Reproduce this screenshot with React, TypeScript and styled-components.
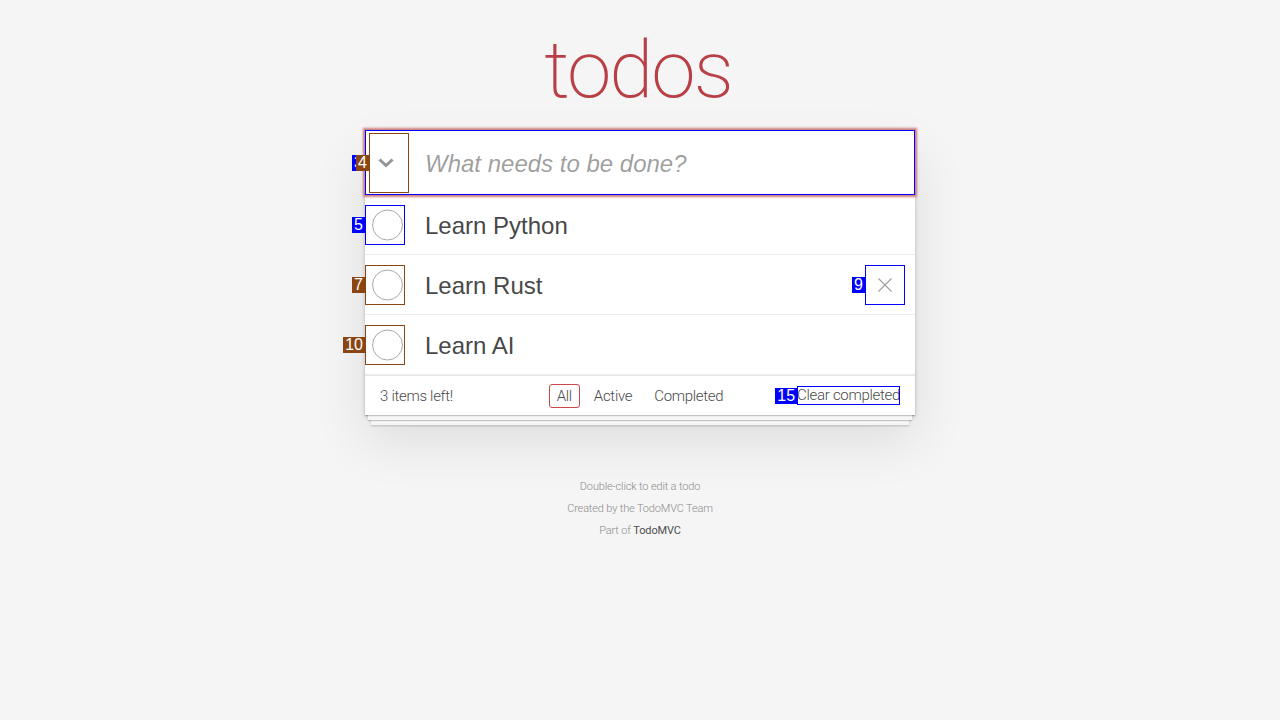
import React from 'react';
import styled, { createGlobalStyle } from 'styled-components';

const Global = createGlobalStyle`
  html, body { margin: 0; padding: 0; }
  body {
    background: #f5f5f5;
    font-family: 'Liberation Sans', Arial, sans-serif;
    color: #111;
    -webkit-font-smoothing: antialiased;
  }
  * { box-sizing: border-box; }
`;

const Page = styled.div`
  width: 550px;
  margin: 0 auto;
`;

const Title = styled.h1`
  margin: 0;
  height: 130px;
  padding-top: 30px;
  padding-right: 4px;
  font-family: Roboto, 'Liberation Sans', sans-serif;
  font-weight: 200;
  font-size: 80px;
  line-height: 80px;
  letter-spacing: -2px;
  text-align: center;
  color: #b83f45;
`;

const TodoApp = styled.section`
  position: relative;
  background: #fff;
  box-shadow: 0 2px 4px 0 rgba(0, 0, 0, 0.2), 0 25px 50px 0 rgba(0, 0, 0, 0.1);
`;

const NewRow = styled.div`
  position: relative;
  z-index: 2;
  display: flex;
  align-items: center;
  height: 65px;
  background: #fff;
  box-shadow: 0 0 2px 2px #cf7d7d, inset 0 -2px 1px rgba(0, 0, 0, 0.03);
`;

const ToggleAll = styled.div`
  position: relative;
  flex: none;
  width: 45px;
  height: 65px;
  display: flex;
  align-items: center;
  justify-content: center;
  padding: 1px 3px 0 0;
`;

const NewInput = styled.input`
  flex: 1;
  height: 100%;
  border: none;
  outline: none;
  background: transparent;
  padding: 2px 15px 0;
  font-family: 'Liberation Sans', Arial, sans-serif;
  font-size: 24px;
  color: #484848;
  &::placeholder {
    font-style: italic;
    color: rgba(0, 0, 0, 0.4);
  }
`;

const List = styled.ul`
  list-style: none;
  margin: 0;
  padding: 0;
`;

const Item = styled.li`
  display: flex;
  align-items: center;
  height: 60px;
  border-bottom: 1px solid #ededed;
`;

const ToggleBox = styled.span`
  position: relative;
  flex: none;
  width: 40px;
  height: 40px;
  margin-top: 1px;
`;

const Label = styled.label`
  flex: 1;
  padding: 4px 0 0 20px;
  font-family: 'Liberation Sans', Arial, sans-serif;
  font-size: 24px;
  line-height: 1.2;
  color: #484848;
`;

const Destroy = styled.button`
  position: relative;
  flex: none;
  width: 40px;
  height: 40px;
  margin: 1px 10px 0 auto;
  padding: 0;
  border: none;
  background: none;
  display: flex;
  align-items: center;
  justify-content: center;
`;

const Footer = styled.footer`
  position: relative;
  display: grid;
  grid-template-columns: 1fr auto 1fr;
  align-items: center;
  height: 40px;
  padding: 0 15px;
  border-top: 1px solid #e6e6e6;
  font-family: Roboto, 'Liberation Sans', sans-serif;
  font-weight: 300;
  font-size: 15px;
  letter-spacing: -0.3px;
  color: #4a4a4a;
  &::before {
    content: '';
    position: absolute;
    right: 0;
    bottom: 0;
    left: 0;
    height: 50px;
    overflow: hidden;
    pointer-events: none;
    box-shadow: 0 1px 1px rgba(0, 0, 0, 0.2), 0 8px 0 -3px #f6f6f6,
      0 9px 1px -3px rgba(0, 0, 0, 0.2), 0 16px 0 -6px #f6f6f6,
      0 17px 2px -6px rgba(0, 0, 0, 0.2);
  }
`;

const Count = styled.span`
  justify-self: start;
`;

const Filters = styled.ul`
  display: flex;
  list-style: none;
  margin: 0;
  padding: 0;
`;

const FilterLink = styled.a<{ $selected?: boolean }>`
  display: block;
  margin: 0 3px;
  padding: 2px 7px 1px;
  line-height: 19px;
  border: 1px solid ${(p) => (p.$selected ? '#ce4646' : 'transparent')};
  border-radius: 3px;
  color: inherit;
  text-decoration: none;
`;

const Clear = styled.button`
  position: relative;
  justify-self: end;
  border: none;
  background: none;
  padding: 0;
  font: inherit;
  letter-spacing: inherit;
  color: inherit;
  line-height: 19px;
`;

const Info = styled.footer`
  margin-top: 66px;
  text-align: center;
  font-family: Roboto, 'Liberation Sans', sans-serif;
  font-weight: 300;
  font-size: 11px;
  letter-spacing: -0.15px;
  color: #8a8a8a;
  text-shadow: 0 1px 0 rgba(255, 255, 255, 0.5);
  p {
    margin: 11px 0;
    line-height: 1;
  }
  a {
    color: #4d4d4d;
    font-weight: 400;
    text-decoration: none;
  }
`;

const Mark = styled.div<{ $c: string }>`
  position: absolute;
  inset: 0;
  border: 1px solid ${(p) => p.$c};
  pointer-events: none;
`;

const Tag = styled.span<{ $c: string }>`
  position: absolute;
  right: calc(100% + 1px);
  top: 50%;
  transform: translateY(-50%);
  background: ${(p) => p.$c};
  color: #fff;
  font-family: 'Liberation Sans', Arial, sans-serif;
  font-size: 16px;
  line-height: 16px;
  font-weight: 400;
  letter-spacing: 0;
  padding: 0 2px;
  white-space: nowrap;
`;

const AllMark = styled(Mark)`
  inset: auto;
  left: 4px;
  top: 3px;
  width: 40px;
  height: 60px;
`;

const BLUE = '#0000ff';
const BROWN = '#8b4513';

const Annot: React.FC<{ n: string; c: string }> = ({ n, c }) => (
  <Mark $c={c}>
    <Tag $c={c}>{n}</Tag>
  </Mark>
);

const Circle = () => (
  <svg width="40" height="40" viewBox="0 0 40 40">
    <circle cx="22.5" cy="20" r="15" fill="none" stroke="#a8a8a8" strokeWidth="1" />
  </svg>
);

const Chevron = () => (
  <svg width="18" height="12" viewBox="0 0 18 12">
    <polyline points="2.5,2.5 9,8.5 15.5,2.5" fill="none" stroke="#949494" strokeWidth="3" />
  </svg>
);

const Cross = () => (
  <svg width="16" height="16" viewBox="0 0 16 16">
    <path d="M1.5 1.5 L14.5 14.5 M14.5 1.5 L1.5 14.5" stroke="#a0a0a0" strokeWidth="1.2" fill="none" />
  </svg>
);

const todos = [
  { id: 5, text: 'Learn Python', c: BLUE, n: '5' },
  { id: 7, text: 'Learn Rust', c: BROWN, n: '7', destroy: true },
  { id: 10, text: 'Learn AI', c: BROWN, n: '10' },
];

export default function App() {
  return (
    <>
      <Global />
      <Page>
        <Title>todos</Title>
        <TodoApp>
          <NewRow>
            <Annot n="3" c={BLUE} />
            <ToggleAll>
              <Chevron />
              <AllMark $c={BROWN}>
                <Tag $c={BROWN}>4</Tag>
              </AllMark>
            </ToggleAll>
            <NewInput placeholder="What needs to be done?" />
          </NewRow>
          <List>
            {todos.map((t) => (
              <Item key={t.id}>
                <ToggleBox>
                  <Circle />
                  <Annot n={t.n} c={t.c} />
                </ToggleBox>
                <Label>{t.text}</Label>
                {t.destroy && (
                  <Destroy>
                    <Cross />
                    <Annot n="9" c={BLUE} />
                  </Destroy>
                )}
              </Item>
            ))}
          </List>
          <Footer>
            <Count>3 items left!</Count>
            <Filters>
              <li><FilterLink $selected>All</FilterLink></li>
              <li><FilterLink>Active</FilterLink></li>
              <li><FilterLink>Completed</FilterLink></li>
            </Filters>
            <Clear>
              Clear completed
              <Annot n="15" c={BLUE} />
            </Clear>
          </Footer>
        </TodoApp>
        <Info>
          <p>Double-click to edit a todo</p>
          <p>Created by the TodoMVC Team</p>
          <p>Part of <a>TodoMVC</a></p>
        </Info>
      </Page>
    </>
  );
}
